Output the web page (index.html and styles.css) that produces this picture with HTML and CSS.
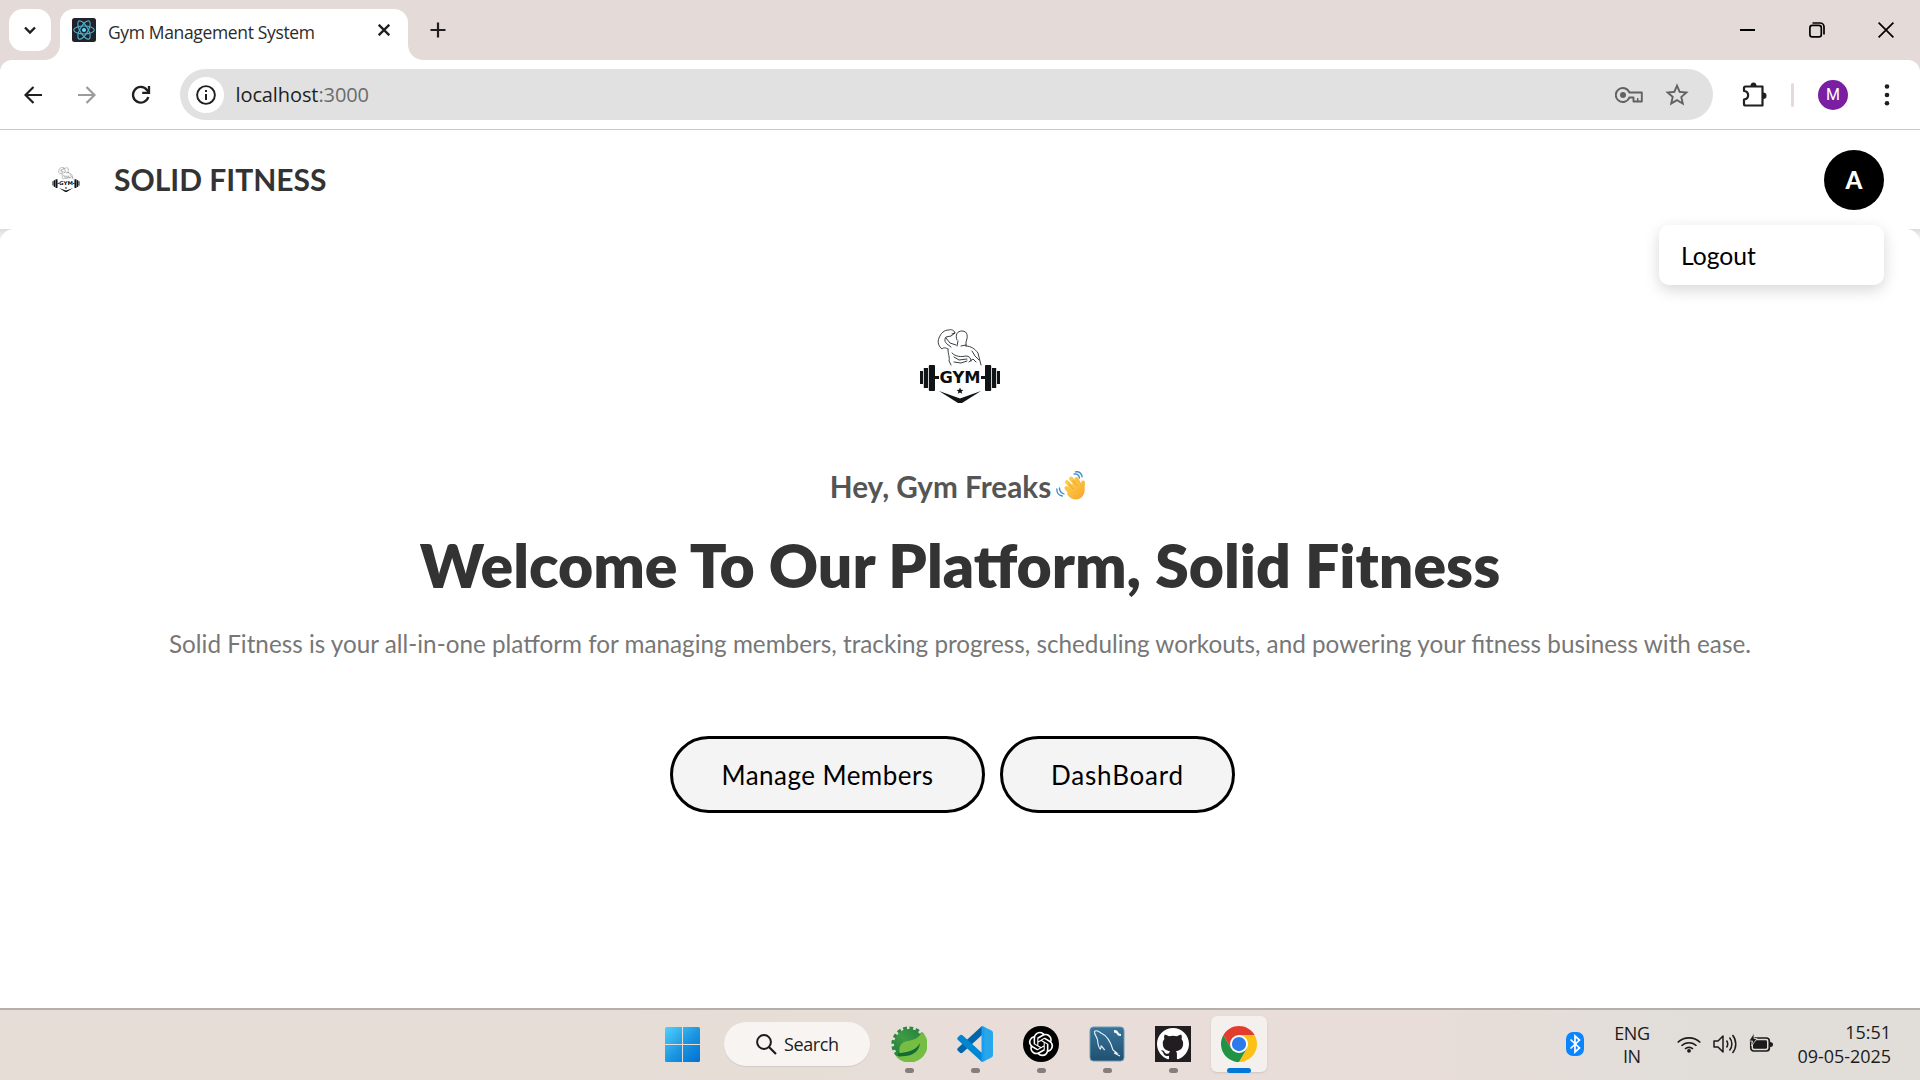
FILE: index.html
```html
<!DOCTYPE html>
<html lang="en">
<head>
<meta charset="utf-8">
<title>Gym Management System</title>
<link rel="stylesheet" href="styles.css">
</head>
<body>
<svg class="defs" aria-hidden="true">
  <symbol id="gym-logo" viewBox="0 0 82 74">
    <g fill="none" stroke="#24292b" stroke-width=".9" stroke-linecap="round">
      <path d="M29 20c-2-1-4-2-6 0-3-2-5-7-3-11 2-5 5-8 10-8 2-1 5 0 6 3l-4 3-5 1c-2 3-1 5 1 7l4 3"/>
      <path d="M27 9l4 5 6 2M36 4l-3 1"/>
      <path d="M38 11c-2-5 0-9 5-9 6 0 6 6 4 11v4M39 12l-1 5M42 17l5-1"/>
      <path d="M29 20c0 6 2 8 1 12l2 4M33 24c4 4 9 4 14 3 3 0 5 2 5 5M47 17c5 0 9 3 12 7l3 12"/>
      <path d="M35 28l5 3 8-1M35 33l7 1 6-2M53 22l3 5 4 4M50 33l4-3 3 3"/>
    </g>
    <g fill="#101416">
      <rect x="1" y="42" width="3" height="13"/><rect x="4.800" y="39" width="4.200" height="20"/><rect x="9.800" y="36" width="6.200" height="26" rx="1"/><rect x="16" y="47" width="4" height="3"/>
      <rect x="78" y="42" width="3" height="13"/><rect x="73" y="39" width="4.200" height="20"/><rect x="66" y="36" width="6.200" height="26" rx="1"/><rect x="62" y="47" width="4" height="3"/>
      <path d="M20 62l21 7.500L62 62 43 74h-4z"/>
      <path d="M41 58.500l1 2.200 2.400.2-1.800 1.500.6 2.400-2.200-1.300-2.200 1.300.6-2.400-1.800-1.500 2.400-.2z"/>
    </g>
    <text class="logo-text" x="20.500" y="54.300" textLength="41" lengthAdjust="spacingAndGlyphs">GYM</text>
  </symbol>
</svg>

<header class="tabstrip">
  <button class="tab-search"><svg width="14" height="14" viewBox="0 0 14 14"><path d="M2 4.500l5 5 5-5" fill="none" stroke="#1f1f1f" stroke-width="2.400"/></svg></button>
  <div class="tab">
    <svg class="favicon" width="24" height="24" viewBox="0 0 24 24"><rect width="24" height="24" rx="2.500" fill="#20232a"/><g fill="none" stroke="#4fb3d0" stroke-width="1.100"><ellipse cx="12" cy="12" rx="10.300" ry="4"/><ellipse cx="12" cy="12" rx="10.300" ry="4" transform="rotate(60 12 12)"/><ellipse cx="12" cy="12" rx="10.300" ry="4" transform="rotate(120 12 12)"/></g><circle cx="12" cy="12" r="2" fill="#61dafb"/></svg>
    <span class="tab-title">Gym Management System</span>
    <svg class="tab-close" width="12" height="12" viewBox="0 0 12 12"><path d="M.7.7l10.600 10.600M11.300.7L.7 11.300" stroke="#1f1f1f" stroke-width="2.300"/></svg>
  </div>
  <svg class="new-tab" width="16" height="16" viewBox="0 0 16 16"><path d="M8 .5v15M.5 8h15" stroke="#1f1f1f" stroke-width="2.200"/></svg>
  <div class="window-controls">
    <svg width="15" height="16" viewBox="0 0 15 16"><path d="M0 8h15" stroke="#000" stroke-width="2"/></svg>
    <svg width="16" height="16" viewBox="0 0 16 16" fill="none" stroke="#000" stroke-width="1.700"><rect x=".9" y="3.400" width="11.400" height="11.400" rx="2.400"/><path d="M3.500 1h7.500a4 4 0 0 1 4 4v7.500"/></svg>
    <svg width="16" height="16" viewBox="0 0 16 16"><path d="M.6.6l14.800 14.800M15.400.6L.6 15.400" stroke="#000" stroke-width="1.700"/></svg>
  </div>
</header>

<div class="toolbar">
  <svg class="back" width="18" height="18" viewBox="0 0 18 18" fill="none" stroke="#1f1f1f" stroke-width="2.200"><path d="M18 9H2M9.500 1L1.500 9l8 8"/></svg>
  <svg class="forward" width="18" height="18" viewBox="0 0 18 18" fill="none" stroke="#9b9b9b" stroke-width="2.200"><path d="M0 9h16M8.500 1l8 8-8 8"/></svg>
  <svg class="reload" width="20" height="20" viewBox="0 0 20 20" fill="none" stroke="#1f1f1f" stroke-width="2.300"><path d="M17.300 12A7.800 7.800 0 1 1 16 5l2 2.500"/><path d="M18 1v6.800h-6.800"/></svg>
  <div class="omnibox">
    <span class="site-info"><svg width="20" height="20" viewBox="0 0 20 20"><circle cx="10" cy="10" r="8.900" fill="none" stroke="#1f1f1f" stroke-width="1.900"/><path d="M10 9v6M10 5v2" stroke="#1f1f1f" stroke-width="2"/></svg></span>
    <span class="url">localhost<span class="port">:3000</span></span>
    <svg class="key" width="28" height="16" viewBox="0 0 28 16"><path d="M14.300 5.500A7 7 0 1 0 14.300 10.500H18.500v4h8.300V5.500z" fill="none" stroke="#5f6163" stroke-width="1.900" stroke-linejoin="round"/><circle cx="8" cy="8" r="3" fill="#5f6163"/><path d="M22.700 11v3" stroke="#5f6163" stroke-width="1.500"/></svg>
    <svg class="star" width="28" height="28" viewBox="0 0 24 24"><path fill="#5f6163" d="M22 9.240l-7.190-.62L12 2 9.190 8.630 2 9.240l5.460 4.730L5.820 21 12 17.270 18.180 21l-1.630-7.030L22 9.240zM12 15.400l-3.760 2.270 1-4.280-3.320-2.880 4.380-.38L12 6.100l1.710 4.040 4.380.38-3.320 2.880 1 4.280L12 15.400z"/></svg>
  </div>
  <svg class="puzzle" width="26" height="26" viewBox="0 0 26 26"><path d="M3.500 4.500h17v19h-17q-1.500 0-1.500-1.500v-4.500c5.500-.5 5.500-8 0-8.500V6q0-1.500 1.500-1.500z" fill="none" stroke="#1f1f1f" stroke-width="2.200" stroke-linejoin="round"/><path d="M8.500 4a3 3.500 0 0 1 6 0zM21 10.500a3.500 3.200 0 0 1 0 6.400z" fill="#1f1f1f"/></svg>
  <span class="divider"></span>
  <span class="profile">M</span>
  <svg class="menu" width="6" height="22" viewBox="0 0 6 22" fill="#1f1f1f"><circle cx="3" cy="2.500" r="2.300"/><circle cx="3" cy="11" r="2.300"/><circle cx="3" cy="19.300" r="2.300"/></svg>
</div>

<main class="page">
  <nav class="navbar">
    <svg class="nav-logo" width="28" height="25"><use href="#gym-logo"/></svg>
    <span class="brand">SOLID FITNESS</span>
    <div class="account">
      <span class="avatar">A</span>
      <div class="dropdown">Logout</div>
    </div>
  </nav>
  <div class="hero-wrap">
    <section class="hero">
      <svg class="hero-logo" width="82" height="74"><use href="#gym-logo"/></svg>
      <h2 class="greeting">Hey, Gym Freaks
        <svg width="30" height="30" viewBox="0 0 30 30"><defs><linearGradient id="hand" x1="0" y1="0" x2="1" y2="1"><stop offset="0" stop-color="#ffd04a"/><stop offset="1" stop-color="#f6a42c"/></linearGradient></defs>
          <g stroke="url(#hand)" stroke-width="4" stroke-linecap="round"><path d="M11 11l8 9M15 7.500l7 9M20.500 8l4 8M10.500 17l7 7" /></g>
          <path d="M12 16l10-6 3 4c0-3 .5-5 2.500-4.500 2.500.5 1 4 1.200 8.500.3 5-3 10.500-8.500 10.500-4 0-7-2-9-5z" fill="url(#hand)"/>
          <path d="M13 13l4 5M17 9.500l4 5.500" stroke="#e99b2b" stroke-width=".8" fill="none"/>
          <path d="M18 3c3-.5 5 1 5.500 4M19.500.8c4-.5 6 1.500 6.700 5M3.500 17c0 3 1.500 5 4.500 6M.8 18c0 4 2 6.500 5.500 7" fill="none" stroke="#3a8cc8" stroke-width="1.300" stroke-linecap="round"/></svg>
      </h2>
      <h1 class="title">Welcome To Our Platform, Solid Fitness</h1>
      <p class="lead">Solid Fitness is your all-in-one platform for managing members, tracking progress, scheduling workouts, and powering your fitness business with ease.</p>
      <div class="actions">
        <button class="pill pill-members">Manage Members</button>
        <button class="pill pill-dash">DashBoard</button>
      </div>
    </section>
  </div>
</main>

<footer class="taskbar">
  <div class="apps">
    <svg class="windows" width="35" height="35" viewBox="0 0 35 35"><defs><linearGradient id="win" gradientUnits="userSpaceOnUse" x1="0" y1="0" x2="35" y2="35"><stop offset="0" stop-color="#4fd2fd"/><stop offset=".55" stop-color="#1a93e0"/><stop offset="1" stop-color="#0070d2"/></linearGradient></defs><path fill="url(#win)" d="M1.500 0H17v17H0V1.500Q0 0 1.500 0zM18 0h15.500Q35 0 35 1.500V17H18zM0 18h17v17H1.500Q0 35 0 33.500zM18 18h17v15.500q0 1.500-1.500 1.500H18z"/></svg>
    <div class="search"><svg width="21" height="21" viewBox="0 0 21 21"><circle cx="8" cy="8" r="6.900" fill="none" stroke="#1b1b1b" stroke-width="2"/><path d="M13 13l7 7" stroke="#1b1b1b" stroke-width="2.200"/></svg><span>Search</span></div>
    <span class="app"><svg width="36" height="36" viewBox="0 0 36 36"><defs><linearGradient id="spr" x1="0" y1="1" x2="1" y2="0"><stop offset="0" stop-color="#1b7a3b"/><stop offset=".5" stop-color="#3f9a45"/><stop offset="1" stop-color="#1d7f3c"/></linearGradient></defs><circle cx="18" cy="18" r="15.800" fill="none" stroke="#2d8740" stroke-width="3.600" stroke-dasharray="3.700 2.500"/><circle cx="18" cy="18" r="15" fill="url(#spr)"/><path d="M32 6.500A18 18 0 0 1 5 30.500l3-1c9 0 17-8 24-23z" fill="#75bd43"/><path d="M31 6q8 12 0 22-9 9-20 6l-4-3 14-3z" fill="#75bd43"/><path d="M31 6c1 9 2 21-10 23-5 1-8-1-12-1-2-8 1-12 8-13 6-1 11-3 14-9z" fill="#75bd43"/><path d="M29 17c-4 7-11 9-19 10-2 0-4 1-4 2.500 1 1 3 1.200 5 .8 10-.3 17-4 18-13.300z" fill="#146b34"/></svg></span>
    <span class="app"><svg width="36" height="36" viewBox="0 0 36 36"><path d="M25 0v9L5.500 26.700q-1.500 1-2.800-.2L.7 24.500q-1-1.200.2-2.500z" fill="#0065a9"/><path d="M25 36v-9L5.500 9.300q-1.500-1-2.800.2L.7 11.500q-1 1.200.2 2.500z" fill="#0087d1"/><path d="M25.500 36l9-4.500q1.500-.8 1.500-2.500V7q0-1.700-1.500-2.500L25.500 0q1.500 1.500 1 3.500v29q0 2-1 3.500z" fill="#28a8ea"/><path d="M24.500 0l3 1v34l-3 1z" fill="#1f9cf0"/></svg></span>
    <span class="app"><svg width="36" height="36" viewBox="0 0 36 36"><circle cx="18" cy="18" r="18"/><path transform="translate(5.800 5.800) scale(1.017)" fill="#fff" d="M22.2819 9.8211a5.9847 5.9847 0 0 0-.5157-4.9108 6.0462 6.0462 0 0 0-6.5098-2.9A6.0651 6.0651 0 0 0 4.9807 4.1818a5.9847 5.9847 0 0 0-3.9977 2.9 6.0462 6.0462 0 0 0 .7427 7.0966 5.98 5.98 0 0 0 .511 4.9107 6.051 6.051 0 0 0 6.5146 2.9001A5.9847 5.9847 0 0 0 13.2599 24a6.0557 6.0557 0 0 0 5.7718-4.2058 5.9894 5.9894 0 0 0 3.9977-2.9001 6.0557 6.0557 0 0 0-.7475-7.0729zm-9.022 12.6081a4.4755 4.4755 0 0 1-2.8764-1.0408l.1419-.0804 4.7783-2.7582a.7948.7948 0 0 0 .3927-.6813v-6.7369l2.02 1.1686a.071.071 0 0 1 .038.052v5.5826a4.504 4.504 0 0 1-4.4945 4.4944zm-9.6607-4.1254a4.4708 4.4708 0 0 1-.5346-3.0137l.142.0852 4.783 2.7582a.7712.7712 0 0 0 .7806 0l5.8428-3.3685v2.3324a.0804.0804 0 0 1-.0332.0615L9.74 19.9502a4.4992 4.4992 0 0 1-6.1408-1.6464zM2.3408 7.8956a4.485 4.485 0 0 1 2.3655-1.9728V11.6a.7664.7664 0 0 0 .3879.6765l5.8144 3.3543-2.0201 1.1685a.0757.0757 0 0 1-.071 0l-4.8303-2.7865A4.504 4.504 0 0 1 2.3408 7.872zm16.5963 3.8558L13.1038 8.364 15.1192 7.2a.0757.0757 0 0 1 .071 0l4.8303 2.7913a4.4944 4.4944 0 0 1-.6765 8.1042v-5.6772a.79.79 0 0 0-.407-.667zm2.0107-3.0231l-.142-.0852-4.7735-2.7818a.7759.7759 0 0 0-.7854 0L9.409 9.2297V6.8974a.0662.0662 0 0 1 .0284-.0615l4.8303-2.7866a4.4992 4.4992 0 0 1 6.6802 4.66zM8.3065 12.863l-2.02-1.1638a.0804.0804 0 0 1-.038-.0567V6.0742a4.4992 4.4992 0 0 1 7.3757-3.4537l-.142.0805L8.704 5.459a.7948.7948 0 0 0-.3927.6813zm1.0976-2.3654l2.602-1.4998 2.6069 1.4998v2.9994l-2.5974 1.4997-2.6067-1.4997Z"/></svg></span>
    <span class="app"><svg width="36" height="36" viewBox="0 0 36 36"><defs><linearGradient id="sql" x1="0" y1="0" x2="0" y2="1"><stop offset="0" stop-color="#37749c"/><stop offset="1" stop-color="#21506f"/></linearGradient></defs><rect x="1" y="1" width="34" height="34" rx="3.500" fill="url(#sql)" stroke="#6d9ab5"/><path d="M31 30l-6-3 3 .2-4-3.200C22 17 19 10 12 7c-2-1.500-5-3-6.500-1.500C5 8 8 11 8.500 14c.5 5 1 8 3 9l.7-3c1.500 1 2.500 3 3.500 4" fill="none" stroke="#e9f2f7" stroke-width="1.100"/><path d="M25 4l3 .5 2 3 2 .5v2l-3-.5-2-2.500-2-.5z" fill="#fff"/></svg></span>
    <span class="app"><svg width="36" height="36" viewBox="0 0 36 36"><rect width="36" height="36" fill="#211d20"/><path transform="translate(2 1.700) scale(1.333)" fill="#fff" d="M12 .297c-6.630 0-12 5.373-12 12 0 5.303 3.438 9.800 8.205 11.385.6.113.82-.258.82-.577 0-.285-.01-1.040-.015-2.040-3.338.724-4.042-1.610-4.042-1.610C4.422 18.070 3.633 17.700 3.633 17.700c-1.087-.744.084-.729.084-.729 1.205.084 1.838 1.236 1.838 1.236 1.070 1.835 2.809 1.305 3.495.998.108-.776.417-1.305.76-1.605-2.665-.3-5.466-1.332-5.466-5.930 0-1.310.465-2.380 1.235-3.220-.135-.303-.54-1.523.105-3.176 0 0 1.005-.322 3.300 1.230.96-.267 1.980-.399 3-.405 1.020.006 2.040.138 3 .405 2.280-1.552 3.285-1.230 3.285-1.230.645 1.653.24 2.873.12 3.176.765.84 1.230 1.910 1.230 3.220 0 4.610-2.805 5.625-5.475 5.920.42.36.81 1.096.81 2.220 0 1.606-.015 2.896-.015 3.286 0 .315.21.69.825.57C20.565 22.092 24 17.592 24 12.297c0-6.627-5.373-12-12-12"/></svg></span>
    <span class="app active"><svg width="36" height="36" viewBox="0 0 48 48"><path d="M44.780 12A24 24 0 0 1 24 48L34.400 30 34.400 18 24 12z" fill="#fbc116"/><path d="M3.220 12A24 24 0 0 0 24 48L34.400 30H13.600z" fill="#229342"/><path d="M3.220 12L13.600 30 24 24 24 12H44.780A24 24 0 0 0 3.220 12z" fill="#e33b2e"/><circle cx="24" cy="24" r="12" fill="#fff"/><circle cx="24" cy="24" r="9.500" fill="#2d7bea"/></svg></span>
  </div>
  <div class="tray">
    <svg width="18" height="24" viewBox="0 0 18 24"><rect width="18" height="24" rx="7" fill="#0a84ff"/><path d="M4.500 7.500l9 8.500L9 20V4l4.500 4-9 8.500" fill="none" stroke="#fff" stroke-width="1.700"/></svg>
    <div class="lang"><span>ENG</span><span>IN</span></div>
    <svg class="wifi" width="24" height="18" viewBox="0 0 24 18" fill="none" stroke="#1b1b1b" stroke-width="1.600"><path d="M.7 7.500a16 16 0 0 1 22.600 0M4.500 10.800a10.600 10.600 0 0 1 15 0M8 14a5.800 5.800 0 0 1 8 0"/><circle cx="12" cy="15.800" r="1.900" fill="#1b1b1b" stroke="none"/></svg>
    <svg class="volume" width="25" height="20" viewBox="0 0 25 20" fill="none" stroke="#1b1b1b" stroke-width="1.500"><path d="M1 7h4l5-5v16l-5-5H1z" stroke-linejoin="round"/><path d="M13.500 6.500a6 6 0 0 1 0 7M16.500 3.500a10 10 0 0 1 0 13M19.500 1a14 14 0 0 1 0 18"/></svg>
    <svg class="battery" width="24" height="20" viewBox="0 0 24 20"><rect x="1.800" y="4" width="18.500" height="13" rx="3" fill="none" stroke="#1b1b1b" stroke-width="1.700"/><rect x="4" y="6.200" width="14" height="8.600" rx="1.300" fill="#1b1b1b"/><path d="M21 8q3 0 3 2.500T21 13z" fill="#1b1b1b"/><path d="M5-1L0 7h3.500L2.500 12 8 4.500H5z" fill="#1b1b1b" stroke="#e2dedb" stroke-width=".8"/></svg>
    <div class="clock"><span>15:51</span><span>09-05-2025</span></div>
  </div>
</footer>
</body>
</html>
```
FILE: styles.css
```css
* { box-sizing: border-box; }
body { margin: 0; width: 1920px; height: 1080px; overflow: hidden; display: flex; flex-direction: column; background: #fff; font-family: "Open Sans", "Noto Sans", sans-serif; white-space: nowrap; }
svg { display: block; flex: none; }
button { font: inherit; padding: 0; border: 0; }
.defs { position: absolute; width: 0; height: 0; }

/* Browser window */
.tabstrip { height: 60px; flex: none; display: flex; align-items: flex-start; padding: 9px 11px 0 9px; background: #e4dbd8; z-index: 1; }
.tab-search { position: relative; z-index: 1; width: 42px; height: 42px; border-radius: 14px; background: #fff; display: flex; align-items: center; justify-content: center; }
.tab { position: relative; width: 348px; height: 51px; margin-left: 9px; padding: 0 18px 9px 12px; border-radius: 14px 14px 0 0; background: #fff; display: flex; align-items: center; }
.tab::before, .tab::after { content: ""; position: absolute; bottom: 0; width: 15px; height: 15px; }
.tab::before { right: 100%; background: radial-gradient(circle at 0 0, #e4dbd8 14.500px, #fff 15.200px); }
.tab::after { left: 100%; background: radial-gradient(circle at 100% 0, #e4dbd8 14.500px, #fff 15.200px); }
.tab-title { margin: 3px auto 0 12px; font-size: 17.500px; letter-spacing: -.35px; color: #2b2b2b; }
.new-tab { margin: 13px 0 0 22px; }
.window-controls { margin: 13px 15px 0 auto; display: flex; gap: 53.500px; }

.toolbar { height: 70px; flex: none; display: flex; align-items: center; border-bottom: 1px solid #c8c8c8; border-radius: 12px 12px 0 0; background: #fff; box-shadow: 0 -12px 0 #e4dbd8; padding: 0 24px; }
.forward { margin-left: 36px; }
.reload { margin-left: 35px; }
.omnibox { width: 1533px; height: 51px; margin-left: 29px; padding: 0 22px 0 7.500px; border-radius: 26px; background: #e1e1e1; display: flex; align-items: center; }
.site-info { width: 36px; height: 36px; border-radius: 50%; background: #fff; display: flex; align-items: center; justify-content: center; }
.url { margin: 0 auto 0 12px; font-size: 20px; letter-spacing: -.1px; color: #1f1f1f; }
.port { color: #6b6b6b; }
.star { margin-left: 20px; }
.puzzle { margin-left: 29px; }
.divider { width: 3px; height: 24px; margin-left: 23px; border-radius: 2px; background: #e4dbd8; }
.profile { width: 30px; height: 30px; margin-left: 24px; border-radius: 50%; background: #7b1fa2; color: #fff; font: 16px/30px Roboto, sans-serif; text-align: center; }
.menu { margin-left: 36px; }

/* Web app */
.page { flex: 1; display: flex; flex-direction: column; font-family: Lato, "Open Sans", sans-serif; }
.navbar { height: 99px; flex: none; display: flex; align-items: center; padding: 0 36px 0 52px; background: #fff; }
.brand { margin: 0 auto 2px 34px; font-size: 30px; line-height: 36px; font-weight: 700; color: #333; }
.account { position: relative; }
.avatar { display: block; width: 60px; height: 60px; border-radius: 50%; background: #000; color: #fff; font-size: 24px; font-weight: 900; line-height: 60px; text-align: center; }
.dropdown { position: absolute; top: 75px; right: 0; width: 225px; height: 60px; padding-left: 22px; border-radius: 10px; background: #fff; box-shadow: 0 5px 15px rgba(0, 0, 0, .16); font-size: 24.700px; line-height: 61px; color: #000; z-index: 2; }
.hero-wrap { flex: 1; background: linear-gradient(#dcdcdc, #fff 14px); }
.hero { height: 100%; padding-top: 100px; border-radius: 14px 14px 0 0; background: #fff; display: flex; flex-direction: column; align-items: center; }
.greeting { margin: 63px 4px 0 0; height: 40px; display: flex; align-items: center; gap: 5px; font-size: 29.700px; font-weight: 700; color: #555; }
.title { margin: 23px 0 0; font-size: 60.700px; line-height: 72px; font-weight: 800; color: #333; }
.lead { margin: 27px 0 0; font-size: 24.250px; line-height: 32px; color: #777; }
.actions { margin: 76px 15px 0 0; display: flex; gap: 15px; }
.pill { height: 77px; border: 3px solid #000; border-radius: 39px; background: #f4f4f4; font-size: 26px; letter-spacing: .45px; color: #000; }
.pill-members { width: 315px; }
.pill-dash { width: 235px; letter-spacing: .8px; }
.logo-text { font: bold 15px "DejaVu Sans", sans-serif; fill: #0b0d0e; }

/* Desktop taskbar */
.taskbar { height: 72px; flex: none; display: flex; justify-content: space-between; border-top: 2px solid #b5afac; background: linear-gradient(90deg, #e5ddd6, #e8ddd8 50%, #e8ddd8 75%, #e1deda 88%); color: #1b1b1b; }
.apps { display: flex; align-items: flex-start; padding: 6px 0 0 665px; }
.windows { margin-top: 11px; }
.search { width: 146px; height: 44px; margin: 6px 11px 0 24px; border-radius: 22px; background: #f8f4f1; box-shadow: 0 1px 1px #d4cac6; display: flex; align-items: center; padding-left: 32px; gap: 7px; font-size: 18px; letter-spacing: -.4px; }
.app { position: relative; width: 56px; height: 56px; margin-right: 10px; border-radius: 6px; display: flex; align-items: center; justify-content: center; }
.app::after { content: ""; position: absolute; bottom: -1px; width: 9px; height: 5px; border-radius: 3px; background: #857e7b; }
.active { background: #f4f0ee; box-shadow: 0 1px 2px #cfc6c2; }
.active::after { width: 24px; background: #0078d7; }
.tray { display: flex; align-items: center; padding: 0 29px 2px 0; }
.lang { margin: 2px 0 0 30px; display: flex; flex-direction: column; align-items: center; font-size: 18px; line-height: 23px; letter-spacing: -.4px; }
.wifi { margin-left: 27px; }
.volume { margin-left: 12px; }
.battery { margin-left: 11px; overflow: visible; }
.clock { margin-left: 25px; display: flex; flex-direction: column; align-items: flex-end; font-size: 18px; line-height: 24px; letter-spacing: -.05px; }
```
